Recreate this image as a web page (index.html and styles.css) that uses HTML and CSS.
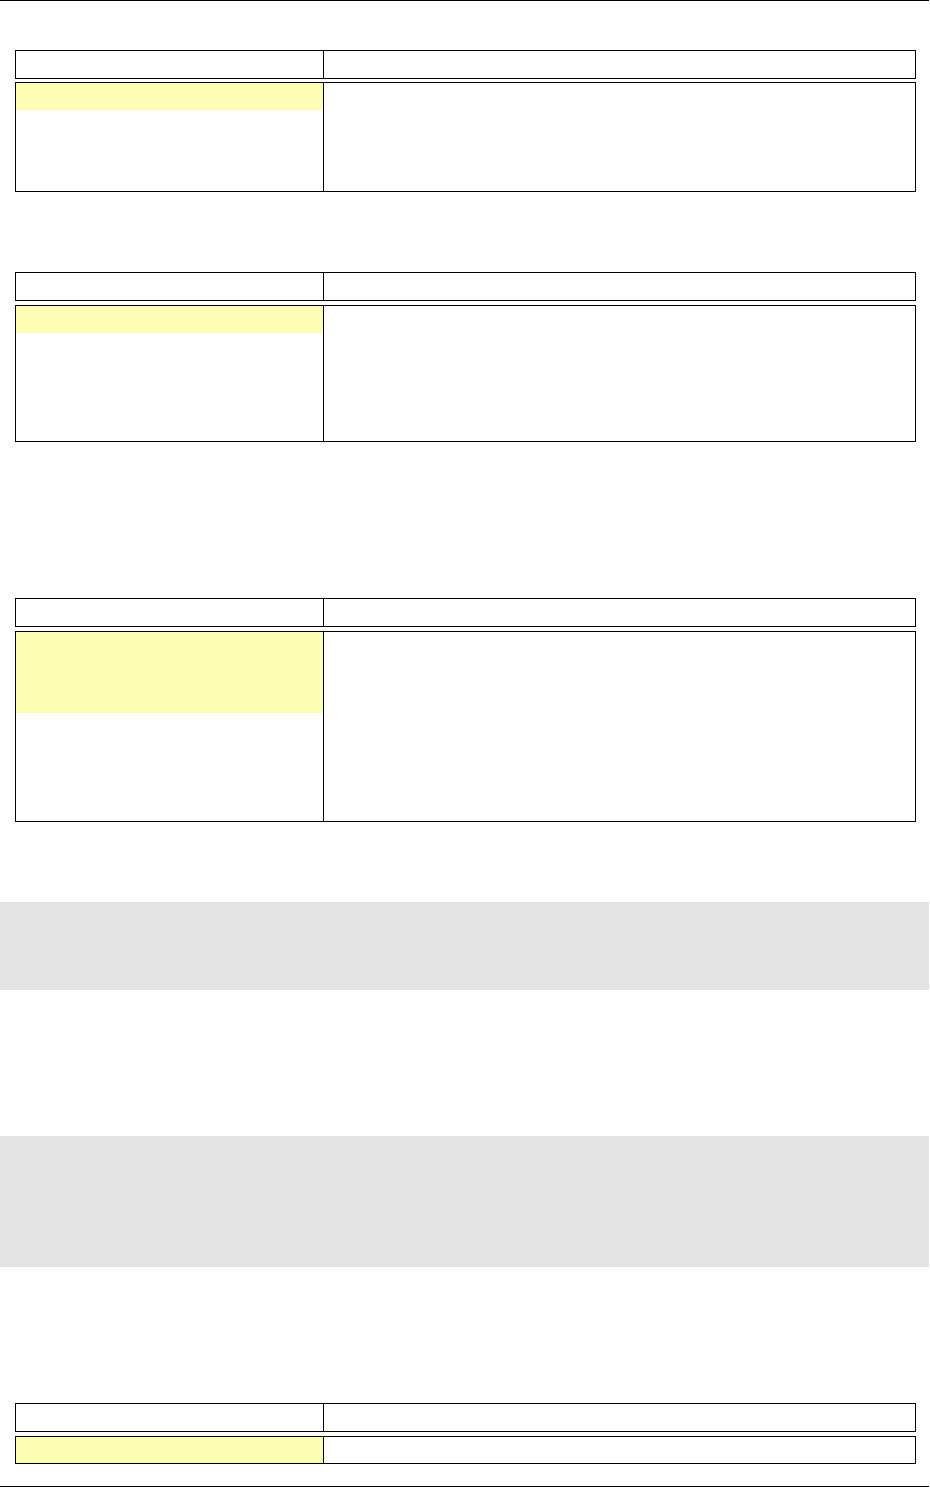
FILE: index.html
```html
<!DOCTYPE html>
<html lang="en">
<head>
<meta charset="utf-8">
<title>Document</title>
<link rel="stylesheet" href="styles.css">
</head>
<body>
<div class="page">
  <div class="rule"></div>

  <section class="tbl tbl-1">
    <div class="row head"><div class="cell key"></div><div class="cell val"></div></div>
    <div class="row body h110"><div class="cell key"><div class="hl l1"></div></div><div class="cell val"></div></div>
  </section>

  <section class="tbl tbl-2">
    <div class="row head"><div class="cell key"></div><div class="cell val"></div></div>
    <div class="row body h137"><div class="cell key"><div class="hl l1"></div></div><div class="cell val"></div></div>
  </section>

  <section class="tbl tbl-3">
    <div class="row head"><div class="cell key"></div><div class="cell val"></div></div>
    <div class="row body h191"><div class="cell key"><div class="hl l3"></div></div><div class="cell val"></div></div>
  </section>

  <div class="band band-1"></div>
  <div class="band band-2"></div>

  <section class="tbl tbl-4">
    <div class="row head"><div class="cell key"></div><div class="cell val"></div></div>
    <div class="row body h28"><div class="cell key full"></div><div class="cell val"></div></div>
  </section>

  <div class="rule rule-bottom"></div>
</div>
</body>
</html>
```
FILE: styles.css
```css
html, body {
  margin: 0;
  padding: 0;
  background: #ffffff;
  font-family: "Liberation Sans", Arial, sans-serif;
}

.page {
  width: 930px;
  display: flex;
  flex-direction: column;
}

.rule {
  height: 1px;
  background: #000000;
  margin-right: 1px;
}

.rule-bottom {
  margin-top: 22px;
}

.tbl {
  display: flex;
  flex-direction: column;
  gap: 3px;
  margin: 0 14px 0 15px;
}

.tbl-1 { margin-top: 49px; }
.tbl-2 { margin-top: 80px; gap: 4px; }
.tbl-3 { margin-top: 156px; gap: 4px; }
.tbl-4 { margin-top: 136px; gap: 4px; }

.row {
  display: grid;
  grid-template-columns: 308px 1fr;
  border: 1px solid #000000;
  box-sizing: border-box;
}

.row.head { height: 29px; }
.h110 { height: 110px; }
.h137 { height: 137px; }
.h191 { height: 191px; }
.h28 { height: 28px; }

.cell.key {
  border-right: 1px solid #000000;
}

.hl {
  background: #fdfeb4;
}
.hl.l1 { height: 27px; }
.hl.l3 { height: 81px; }

.cell.full {
  background: #fdfeb4;
}

.band {
  background: #e3e3e3;
  margin-right: 1px;
}

.band-1 {
  margin-top: 80px;
  height: 88px;
}

.band-2 {
  margin-top: 146px;
  height: 131px;
}
```
